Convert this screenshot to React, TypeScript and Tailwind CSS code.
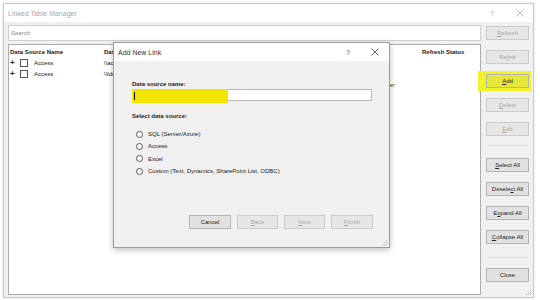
import React from "react";

const font = { fontFamily: '"Liberation Sans", Arial, sans-serif' };

function XIcon({ color = "#666" }: { color?: string }) {
  return (
    <svg width="8" height="8" viewBox="0 0 8 8">
      <path d="M0.5 0.5 L7.5 7.5 M7.5 0.5 L0.5 7.5" stroke={color} strokeWidth="0.8" fill="none" />
    </svg>
  );
}

function Grip() {
  return (
    <svg width="6" height="6" viewBox="0 0 6 6">
      <rect x="4" y="0" width="1" height="1" fill="#b8b8b8" />
      <rect x="2" y="2" width="1" height="1" fill="#b8b8b8" />
      <rect x="4" y="2" width="1" height="1" fill="#b8b8b8" />
      <rect x="0" y="4" width="1" height="1" fill="#b8b8b8" />
      <rect x="2" y="4" width="1" height="1" fill="#b8b8b8" />
      <rect x="4" y="4" width="1" height="1" fill="#b8b8b8" />
    </svg>
  );
}

function Btn({
  children,
  disabled,
  w = "w-[43px]",
  bg,
}: {
  children: React.ReactNode;
  disabled?: boolean;
  w?: string;
  bg?: string;
}) {
  return (
    <div
      className={
        "h-[14px] flex items-center justify-center border text-[6px] leading-none relative " +
        w +
        " " +
        (disabled
          ? "bg-[#e6e6e6] border-[#cbcbcb] text-[#a6a6a6]"
          : (bg ?? "bg-[#e1e1e1]") + " border-[#b4b4b4] text-[#222]")
      }
    >
      {children}
    </div>
  );
}

function Radio({ label }: { label: string }) {
  return (
    <div className="h-[12.3px] flex items-center pl-[4px]">
      <div className="w-[7px] h-[7px] rounded-full border border-[#555] bg-white" />
      <span className="ml-[5px] text-[6px] text-[#222] leading-none">{label}</span>
    </div>
  );
}

export default function App() {
  return (
    <div className="w-[540px] h-[300px] bg-white relative overflow-hidden pt-[3px] pl-[3px]" style={font}>
      {/* main window */}
      <div className="w-[531px] h-[295px] border border-[#c8c8c8] bg-[#f0f0f0] flex flex-col relative shadow-[0_0_3px_rgba(0,0,0,0.12)]">
        <div className="h-[18px] bg-white flex items-center pl-[4px] shrink-0">
          <span className="text-[7px] text-[#a8a8a8] leading-none">Linked Table Manager</span>
          <span className="ml-auto text-[7px] text-[#a8a8a8] leading-none">?</span>
          <div className="ml-[22px] mr-[9px] flex items-center">
            <XIcon color="#a8a8a8" />
          </div>
        </div>
        <div className="flex flex-1 min-h-0">
          <div className="w-[473px] ml-[4px] pt-[3px] flex flex-col">
            <div className="h-[16px] border border-[#d0d0d0] bg-white flex items-center pl-[2px] shrink-0">
              <span className="text-[6px] text-[#8a8a8a] leading-none">Search</span>
            </div>
            <div className="mt-[3px] h-[251px] border border-[#ababab] bg-white pl-[1px] pt-[1px] text-[6px] leading-none text-[#222]">
              <div className="grid grid-cols-[94px_318px_1fr]">
                <div className="h-[11px] flex items-center font-bold">Data Source Name</div>
                <div className="h-[11px] flex items-center font-bold">Data Source</div>
                <div className="h-[11px] flex items-center font-bold">Refresh Status</div>

                <div className="h-[11px] flex items-center">
                  <span className="font-bold text-[8px] w-[10px]">+</span>
                  <div className="w-[8px] h-[8px] border border-[#555] bg-white" />
                  <span className="ml-[6px]">Access</span>
                </div>
                <div className="h-[11px] flex items-center">\\access\data\Northwind.accdb</div>
                <div className="h-[11px]" />

                <div className="h-[11px] flex items-center">
                  <span className="font-bold text-[8px] w-[10px]">+</span>
                  <div className="w-[8px] h-[8px] border border-[#555] bg-white" />
                  <span className="ml-[6px]">Access</span>
                </div>
                <div className="h-[11px] flex items-center">\\ldn\share\Sales\Sales.accdb</div>
                <div className="h-[11px]" />

                <div className="h-[11px]" />
                <div className="h-[11px] flex items-center justify-end pr-[26px]">Folder:</div>
                <div className="h-[11px]" />
              </div>
            </div>
          </div>
          <div className="ml-[5px] w-[43px] pt-[4px] flex flex-col">
            <Btn disabled>
              <span className="underline">R</span>efresh
            </Btn>
            <div className="mt-[10px]">
              <Btn disabled>
                Re<span className="underline">l</span>ink
              </Btn>
            </div>
            <div className="mt-[10px] relative">
              <div className="absolute left-[-8px] right-[-2px] top-[-3px] bottom-[-3px] bg-[#f2f22a]" />
              <Btn bg="bg-[#e6e63a]">
                <span className="underline">A</span>dd
              </Btn>
            </div>
            <div className="mt-[10px]">
              <Btn disabled>
                <span className="underline">D</span>elete
              </Btn>
            </div>
            <div className="mt-[10px]">
              <Btn disabled>
                <span className="underline">E</span>dit
              </Btn>
            </div>
            <div className="mt-[9px] h-px w-[40px] mx-auto bg-[#dedede]" />
            <div className="mt-[12px]">
              <Btn>
                <span className="underline">S</span>elect All
              </Btn>
            </div>
            <div className="mt-[10px]">
              <Btn>
                Desele<span className="underline">c</span>t All
              </Btn>
            </div>
            <div className="mt-[10px]">
              <Btn>
                E<span className="underline">x</span>pand All
              </Btn>
            </div>
            <div className="mt-[10px]">
              <Btn>
                <span className="underline">C</span>ollapse All
              </Btn>
            </div>
            <div className="mt-[13px] h-px w-[40px] mx-auto bg-[#dedede]" />
            <div className="mt-[10px]">
              <Btn>Close</Btn>
            </div>
          </div>
        </div>
        <div className="absolute right-[1px] bottom-[1px]">
          <Grip />
        </div>
      </div>

      {/* dialog */}
      <div className="absolute left-[113px] top-[42px] w-[277px] h-[206px] border border-[#9c9c9c] bg-[#f0f0f0] flex flex-col shadow-[0_2px_6px_rgba(0,0,0,0.25)]">
        <div className="h-[18px] bg-white flex items-center pl-[4px] shrink-0">
          <span className="text-[7px] text-[#333] leading-none">Add New Link</span>
          <span className="ml-auto text-[7px] text-[#555] leading-none">?</span>
          <div className="ml-[21px] mr-[10px] flex items-center">
            <XIcon color="#444" />
          </div>
        </div>
        <div className="flex-1 flex flex-col pl-[18px] pr-[16px] pb-[18px] relative">
          <div className="mt-[19px] h-[8px] flex items-center text-[6px] font-bold text-[#222] leading-none">
            Data source name:
          </div>
          <div className="mt-[1px] h-[12px] w-[240px] border border-[#b9b9b9] bg-white relative">
            <div className="absolute left-[-1px] top-[-1px] w-[96px] h-[14px] bg-[#f2e400]" />
            <div className="absolute left-[1px] top-[2px] w-px h-[8px] bg-black" />
          </div>
          <div className="mt-[11px] h-[8px] flex items-center text-[6px] font-bold text-[#222] leading-none">
            Select data source:
          </div>
          <div className="mt-[8px] flex flex-col">
            <Radio label="SQL (Server/Azure)" />
            <Radio label="Access" />
            <Radio label="Excel" />
            <Radio label="Custom (Text, Dynamics, SharePoint List, ODBC)" />
          </div>
          <div className="mt-auto flex justify-end gap-[6px]">
            <Btn w="w-[42px]">Cancel</Btn>
            <Btn w="w-[41px]" disabled>
              <span className="underline">B</span>ack
            </Btn>
            <Btn w="w-[41px]" disabled>
              <span className="underline">N</span>ext
            </Btn>
            <Btn w="w-[42px]" disabled>
              <span className="underline">F</span>inish
            </Btn>
          </div>
          <div className="absolute right-[1px] bottom-[1px]">
            <Grip />
          </div>
        </div>
      </div>
    </div>
  );
}
